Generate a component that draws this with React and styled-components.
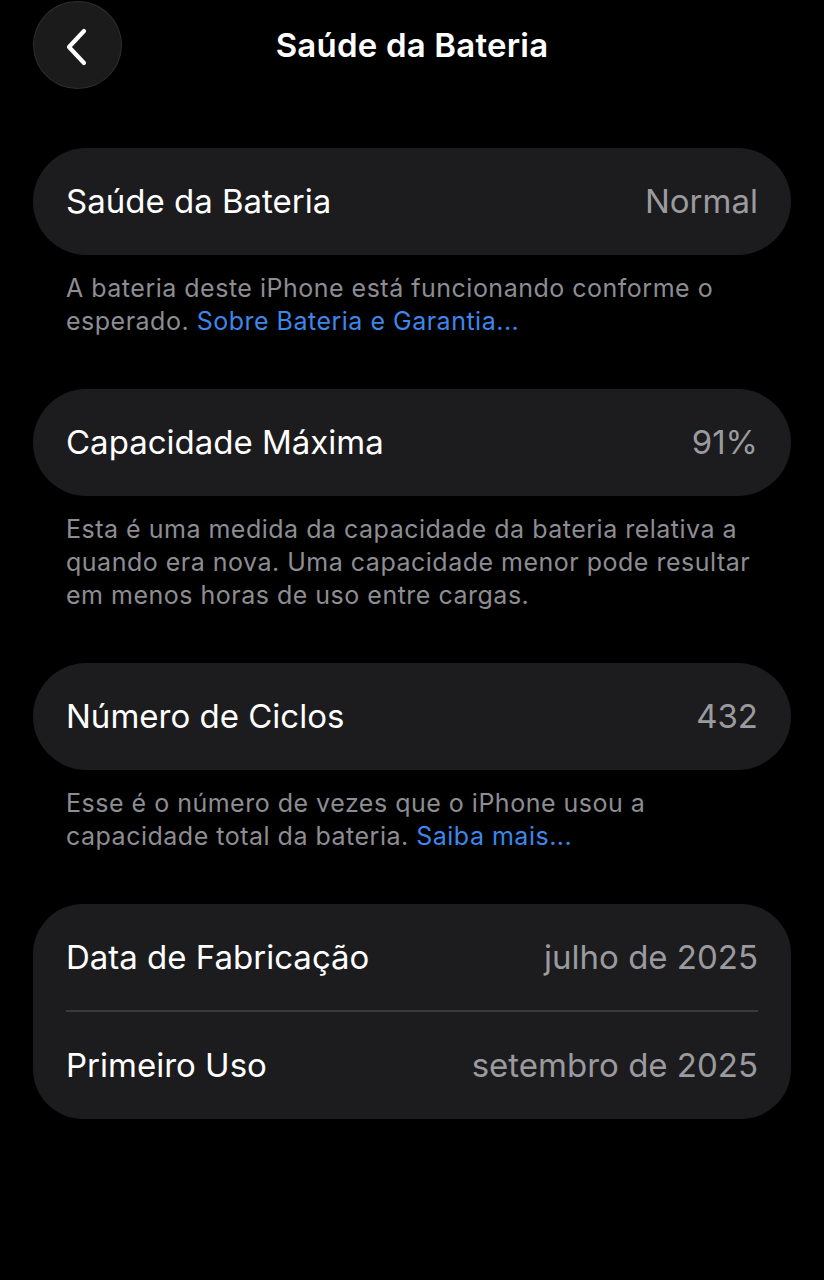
import React from 'react';
import styled, { createGlobalStyle } from 'styled-components';

const GlobalStyle = createGlobalStyle`
  html, body {
    margin: 0;
    padding: 0;
    background: #000;
  }
  body {
    font-family: Inter, "Noto Sans", "Liberation Sans", sans-serif;
    color: #fff;
    -webkit-font-smoothing: antialiased;
  }
`;

const Screen = styled.div`
  width: 824px;
  min-height: 1280px;
  background: #000;
  box-sizing: border-box;
  padding: 1px 33px 0 33px;
`;

const Header = styled.header`
  position: relative;
  height: 88px;
  display: flex;
  align-items: center;
  justify-content: center;
  margin-bottom: 59px;
`;

const BackButton = styled.button`
  position: absolute;
  left: 0;
  top: 0;
  width: 89px;
  height: 88px;
  border-radius: 50%;
  background: #1b1b1c;
  border: 1.5px solid #2e2e30;
  box-sizing: border-box;
  display: flex;
  align-items: center;
  justify-content: center;
  padding: 0;
  cursor: pointer;
`;

const Title = styled.h1`
  margin: 0;
  font-size: 33px;
  font-weight: 600;
  letter-spacing: 0.2px;
  color: #fff;
`;

const Card = styled.section`
  background: #1c1c1e;
  border-radius: ${(p) => (p.$tall ? '50px' : '54px')};
  padding: 0 33px;
`;

const Row = styled.div`
  height: ${(p) => p.$h || 107}px;
  display: flex;
  align-items: center;
  justify-content: space-between;
  font-size: 33px;
  padding-bottom: 1px;
  box-sizing: border-box;
`;

const Label = styled.span`
  color: #fff;
`;

const Value = styled.span`
  color: #9a9a9f;
`;

const Divider = styled.div`
  height: 2px;
  background: #3a3a3c;
`;

const Footer = styled.p`
  margin: 17px 33px 51px 33px;
  font-size: 25px;
  line-height: 33px;
  color: #8d8d93;
  letter-spacing: 0.5px;
`;

const Link = styled.a`
  color: #3d86ec;
  text-decoration: none;
`;

const Chevron = () => (
  <svg width="30" height="44" viewBox="0 0 30 44" fill="none">
    <path
      d="M21 8 L6 24 L21 40"
      stroke="#fff"
      strokeWidth="4.2"
      strokeLinecap="round"
      strokeLinejoin="round"
    />
  </svg>
);

export default function App() {
  return (
    <>
      <GlobalStyle />
      <Screen>
        <Header>
          <BackButton aria-label="Voltar">
            <Chevron />
          </BackButton>
          <Title>Saúde da Bateria</Title>
        </Header>

        <Card>
          <Row>
            <Label>Saúde da Bateria</Label>
            <Value>Normal</Value>
          </Row>
        </Card>
        <Footer>
          A bateria deste iPhone está funcionando conforme o esperado.{' '}
          <Link href="#">Sobre Bateria e Garantia...</Link>
        </Footer>

        <Card>
          <Row>
            <Label>Capacidade Máxima</Label>
            <Value>91%</Value>
          </Row>
        </Card>
        <Footer>
          Esta é uma medida da capacidade da bateria relativa a quando era nova. Uma
          capacidade menor pode resultar em menos horas de uso entre cargas.
        </Footer>

        <Card>
          <Row>
            <Label>Número de Ciclos</Label>
            <Value>432</Value>
          </Row>
        </Card>
        <Footer>
          Esse é o número de vezes que o iPhone usou a capacidade total da bateria.{' '}
          <Link href="#">Saiba mais...</Link>
        </Footer>

        <Card $tall>
          <Row $h={106}>
            <Label>Data de Fabricação</Label>
            <Value>julho de 2025</Value>
          </Row>
          <Divider />
          <Row $h={107}>
            <Label>Primeiro Uso</Label>
            <Value>setembro de 2025</Value>
          </Row>
        </Card>
      </Screen>
    </>
  );
}
